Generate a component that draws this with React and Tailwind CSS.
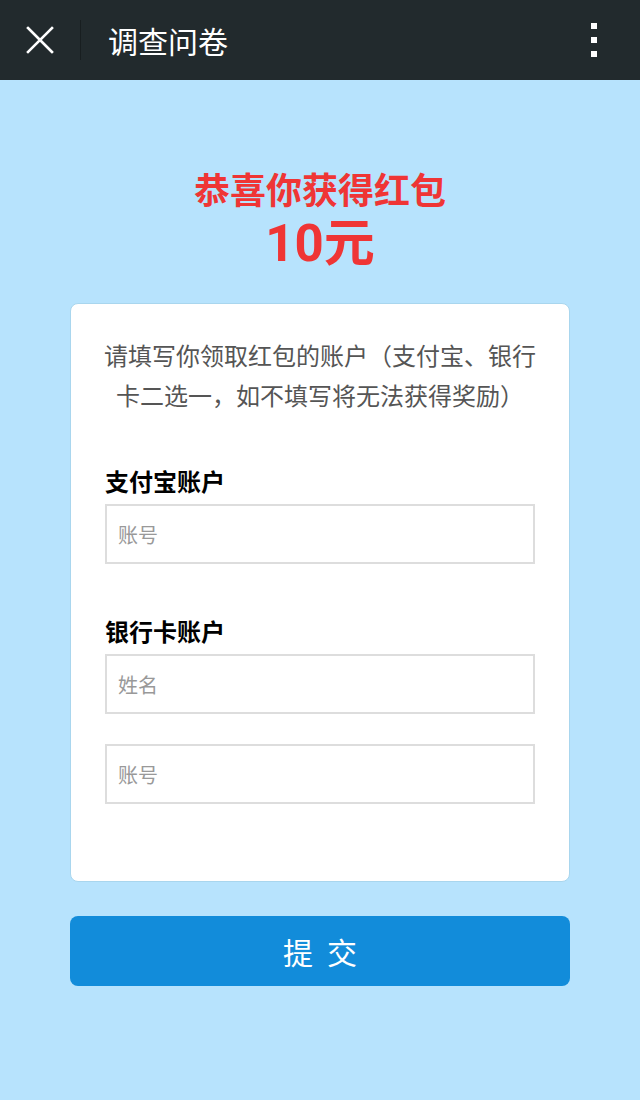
import React from 'react';

const Field = ({ placeholder, className = '' }) => (
  <input
    type="text"
    placeholder={placeholder}
    className={`block w-full h-[60px] border-2 border-[#dddddd] bg-white px-[11px] text-[20px] text-[#333] placeholder:text-[#999] outline-none ${className}`}
  />
);

export default function App() {
  return (
    <div className="min-h-[1100px] bg-[#b7e3fd] [font-family:'Noto_Sans_CJK_SC',sans-serif]">
      {/* top bar */}
      <div className="h-[80px] bg-[#222a2d] flex items-center">
        <div className="w-[80px] h-[80px] flex items-center justify-center">
          <svg width="28" height="28" viewBox="0 0 28 28" fill="none" stroke="white" strokeWidth="2.6" strokeLinecap="square">
            <path d="M2 2 L26 26 M26 2 L2 26" />
          </svg>
        </div>
        <div className="w-px h-[40px] bg-[#181e20]" />
        <div className="ml-[27px] text-[30px] leading-none text-white">调查问卷</div>
        <div className="ml-auto mr-[43px] flex flex-col gap-[8px]">
          <div className="w-[6px] h-[6px] bg-white" />
          <div className="w-[6px] h-[6px] bg-white" />
          <div className="w-[6px] h-[6px] bg-white" />
        </div>
      </div>

      <div className="pt-[86px] text-center text-[#ef3535] font-bold">
        <div className="text-[36px] leading-[44px]">恭喜你获得红包</div>
        <div className="mt-[6px] text-[51px] leading-[56px] [font-family:'Roboto','Noto_Sans_CJK_SC',sans-serif]">10元</div>
      </div>

      <div className="mx-[70px] mt-[31px] bg-white border border-[#a9d6ee] rounded-[8px] px-[34px] pt-[31px] pb-[77px]">
        <p className="-mx-[6px] text-center text-[24px] leading-[40px] text-[#555]">
          请填写你领取红包的账户（支付宝、银行卡二选一，如不填写将无法获得奖励）
        </p>

        <div className="mt-[50px] text-[24px] leading-[32px] font-bold text-black">支付宝账户</div>
        <Field placeholder="账号" className="mt-[7px]" />

        <div className="mt-[51px] text-[24px] leading-[32px] font-bold text-black">银行卡账户</div>
        <Field placeholder="姓名" className="mt-[7px]" />
        <Field placeholder="账号" className="mt-[30px]" />
      </div>

      <div className="mx-[70px] mt-[34px]">
        <button className="w-full h-[70px] rounded-[8px] bg-[#128cda] text-white text-[30px] flex items-center justify-center gap-[14px]">
          <span>提</span>
          <span>交</span>
        </button>
      </div>
    </div>
  );
}
